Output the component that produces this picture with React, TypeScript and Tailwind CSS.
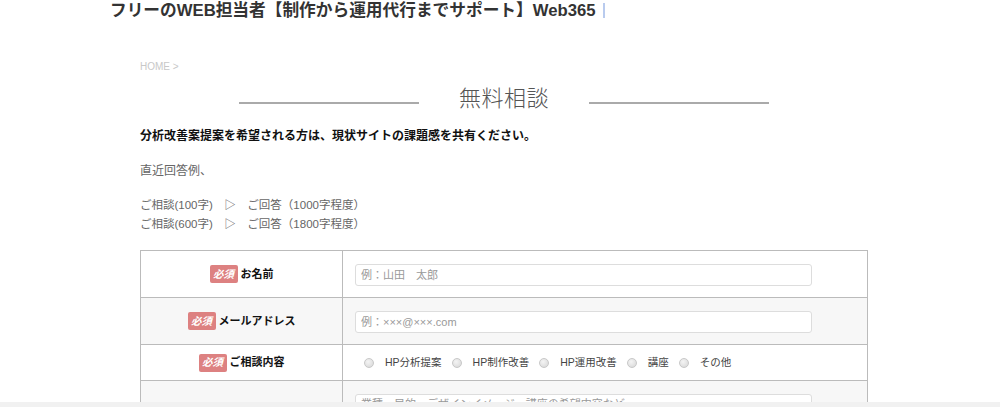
import React from "react";

const font = {
  fontFamily: '"Liberation Sans", "Noto Sans CJK JP", Arial, sans-serif',
};

function Badge() {
  return (
    <span className="inline-flex h-[18px] w-[28px] items-center justify-center rounded-[2px] bg-[#dd8181] text-[10.5px] font-bold italic leading-none text-white">
      必須
    </span>
  );
}

function Label({ text }: { text: string }) {
  return (
    <div className="flex w-[202px] shrink-0 items-center justify-center gap-[3px] border-r border-[#bbb]">
      <Badge />
      <span className="text-[11px] font-bold leading-none text-[#111]">{text}</span>
    </div>
  );
}

function Radio({ label }: { label: string }) {
  return (
    <div className="flex items-center">
      <span className="h-[10px] w-[10px] rounded-full border border-[#c8c8c8] bg-[radial-gradient(circle_at_40%_35%,#f4f4f4,#d6d6d6)]" />
      <span className="ml-[11px] text-[10.5px] leading-none text-[#444]">{label}</span>
    </div>
  );
}

export default function App() {
  return (
    <div className="flex h-[407px] w-full flex-col overflow-hidden bg-white" style={font}>
      <div className="min-h-0 flex-1 overflow-hidden">
        <div className="flex h-[21px] items-center pl-[110px]">
          <span className="whitespace-nowrap text-[16.7px] font-bold leading-[21px] text-[#333]">
            フリーのWEB担当者【制作から運用代行までサポート】Web365
          </span>
          <span className="ml-[7px] h-[15px] w-[2px] bg-[#b9cbee]" />
        </div>

        <div className="ml-[140px] w-[728px]">
          <div className="mt-[39px] text-[10px] leading-[14px] text-[#c8c8c8]">HOME &gt;</div>

          <div className="mt-[10px] flex h-[30px] items-center justify-center">
            <span className="mt-[8px] h-[2px] w-[180px] bg-[#aaa]" />
            <span className="mx-[40px] text-[22px] font-light leading-[30px] tracking-[0.5px] text-[#555]">
              無料相談
            </span>
            <span className="mt-[8px] h-[2px] w-[180px] bg-[#aaa]" />
          </div>

          <p className="mt-[13px] text-[12px] font-bold leading-[18px] text-[#111]">
            分析改善案提案を希望される方は、現状サイトの課題感を共有ください。
          </p>
          <p className="mt-[17px] text-[12px] leading-[18px] text-[#666]">直近回答例、</p>
          <div className="mt-[16px] text-[11.5px] leading-[19px] text-[#666]">
            <div>ご相談(100字)　▷　ご回答（1000字程度）</div>
            <div>ご相談(600字)　▷　ご回答（1800字程度）</div>
          </div>

          <div className="mt-[16px] border border-[#bbb]">
            <div className="flex h-[47px] border-b border-[#bbb] bg-white">
              <Label text="お名前" />
              <div className="flex-1 pl-[12px] pt-[11px]">
                <input
                  readOnly
                  placeholder="例：山田　太郎"
                  className="h-[22px] w-[457px] rounded-[3px] border border-[#ddd] bg-white px-[5px] text-[11px] outline-none placeholder:text-[#999]"
                />
              </div>
            </div>
            <div className="flex h-[47px] border-b border-[#bbb] bg-[#f7f7f7]">
              <Label text="メールアドレス" />
              <div className="flex-1 pl-[12px] pt-[11px]">
                <input
                  readOnly
                  placeholder="例：×××@×××.com"
                  className="h-[22px] w-[457px] rounded-[3px] border border-[#ddd] bg-white px-[5px] text-[11px] outline-none placeholder:text-[#999]"
                />
              </div>
            </div>
            <div className="flex h-[36px] border-b border-[#bbb] bg-white">
              <Label text="ご相談内容" />
              <div className="flex flex-1 items-center gap-[10px] pl-[21px]">
                <Radio label="HP分析提案" />
                <Radio label="HP制作改善" />
                <Radio label="HP運用改善" />
                <Radio label="講座" />
                <Radio label="その他" />
              </div>
            </div>
            <div className="flex h-[80px] bg-[#f7f7f7]">
              <div className="w-[202px] shrink-0 border-r border-[#bbb]" />
              <div className="flex-1 pl-[12px] pt-[13px]">
                <div className="h-[60px] w-[457px] rounded-[3px] border border-[#ddd] bg-white px-[5px] pt-[2px] text-[11px] leading-[14px] text-[#999]">
                  業種・目的・デザインイメージ・講座の希望内容など
                </div>
              </div>
            </div>
          </div>
        </div>
      </div>
      <div className="h-[5px] w-full shrink-0 bg-[#f1f1f1]" />
    </div>
  );
}
